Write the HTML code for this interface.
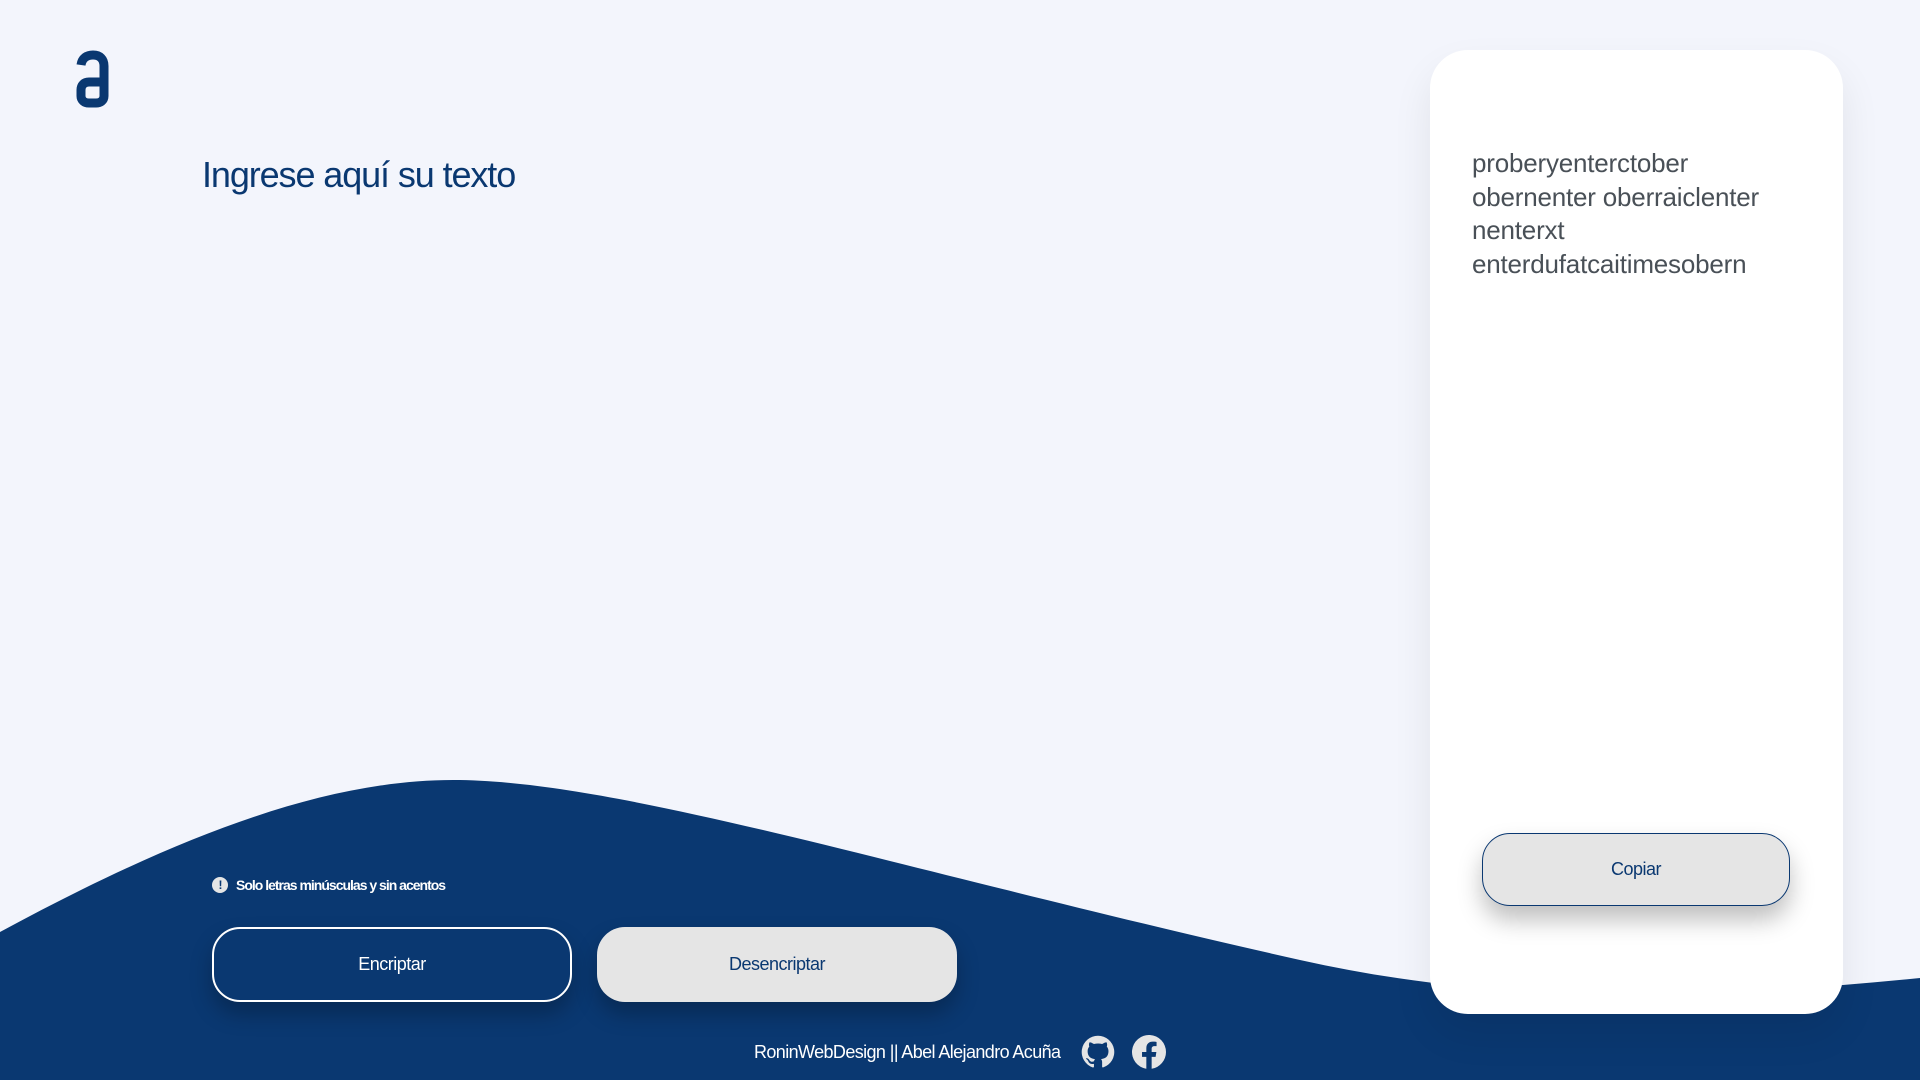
<!DOCTYPE html>
<html><head><meta charset="utf-8"><style>
*{margin:0;padding:0;box-sizing:border-box}
body{width:1920px;height:1080px;background:#f3f5fc;position:relative;overflow:hidden;font-family:"Liberation Sans",sans-serif}
.title{position:absolute;left:202px;top:154px;font-size:36px;color:#0a3871;letter-spacing:-1.1px}
svg.wave{position:absolute;left:0;top:0}
.warn{position:absolute;left:212px;top:877px;color:#fff;font-size:14px;font-weight:bold;letter-spacing:-1px;display:flex;align-items:center;gap:8px}
.warn i{width:16px;height:16px;border-radius:50%;background:#e5e5e5;color:#0a3871;font-style:normal;font-size:12px;display:flex;align-items:center;justify-content:center}
.btn{position:absolute;top:927px;width:360px;height:75px;border-radius:28px;font-size:18px;display:flex;align-items:center;justify-content:center;letter-spacing:-0.5px;box-shadow:0 12px 22px rgba(0,0,0,.25)}
.b1{left:212px;border:2px solid #fff;color:#fff;background:#0a3871}
.b2{left:597px;background:#e5e5e5;color:#0a3871}
.foot{position:absolute;left:754px;top:1042px;color:#fff;font-size:18px;letter-spacing:-0.6px}
.card{position:absolute;left:1430px;top:50px;width:413px;height:964px;background:#fff;border-radius:38px;box-shadow:0 20px 40px rgba(0,0,0,.08)}
.out{position:absolute;left:42px;top:97px;font-size:26px;line-height:33.5px;color:#495057;letter-spacing:-0.2px}
.copy{position:absolute;left:52px;top:783px;width:308px;height:73px;border:1.5px solid #0a3871;border-radius:28px;background:#e5e5e5;color:#0a3871;font-size:18px;letter-spacing:-0.5px;display:flex;align-items:center;justify-content:center;box-shadow:0 14px 24px rgba(0,0,0,.25)}
</style></head><body>
<svg style="position:absolute;left:0;top:0" width="140" height="130"><path d="M81,65 C82,58 87,55 93,55 C100,55 104,59 104,66 V96 C104,101 100,103 96,103 H89 C84,103 81,100 81,96 V90 C81,85 84,82 89,82 H104" fill="none" stroke="#0a3871" stroke-width="9"/></svg>
<div class="title">Ingrese aquí su texto</div>
<svg class="wave" width="1920" height="1080"><path d="M0,932 C170,840 320,780 453,780 C620,780 900,870 1300,960 C1500,1005 1700,1000 1920,978 L1920,1080 L0,1080 Z" fill="#0a3871"/></svg>
<div class="warn"><i>!</i>Solo letras minúsculas y sin acentos</div>
<div class="btn b1">Encriptar</div>
<div class="btn b2">Desencriptar</div>
<div class="foot">RoninWebDesign || Abel Alejandro Acuña</div>
<svg style="position:absolute;left:1081px;top:1035px" width="34" height="34" viewBox="0 0 24 24"><path fill="#e5e5e5" d="M12 .5a11.5 11.5 0 0 0-3.64 22.410c.58.1.79-.25.79-.56v-2c-3.2.7-3.880-1.540-3.880-1.540-.53-1.330-1.290-1.690-1.290-1.690-1.050-.72.08-.7.08-.7 1.160.08 1.770 1.190 1.770 1.190 1.030 1.770 2.700 1.260 3.360.96.1-.75.4-1.260.73-1.550-2.550-.29-5.240-1.280-5.240-5.690 0-1.260.45-2.280 1.190-3.090-.12-.29-.52-1.460.11-3.050 0 0 .97-.31 3.170 1.180a11 11 0 0 1 5.770 0c2.200-1.490 3.170-1.180 3.170-1.180.63 1.590.23 2.760.11 3.050.74.81 1.190 1.830 1.190 3.090 0 4.420-2.690 5.390-5.260 5.680.41.36.78 1.060.78 2.140v3.170c0 .31.21.67.8.56A11.5 11.5 0 0 0 12 .5z"/></svg>
<svg style="position:absolute;left:1132px;top:1035px" width="34" height="34" viewBox="0 0 24 24"><path fill="#e5e5e5" d="M24 12a12 12 0 1 0-13.88 11.85v-8.38H7.08V12h3.04V9.36c0-3 1.79-4.67 4.53-4.67 1.31 0 2.690.24 2.690.24v2.950h-1.520c-1.490 0-1.950.93-1.950 1.880V12h3.330l-.53 3.470h-2.800v8.380A12 12 0 0 0 24 12z"/></svg>
<div class="card">
<div class="out">proberyenterctober<br>obernenter oberraiclenter<br>nenterxt<br>enterdufatcaitimesobern</div>
<div class="copy">Copiar</div>
</div>
</body></html>
